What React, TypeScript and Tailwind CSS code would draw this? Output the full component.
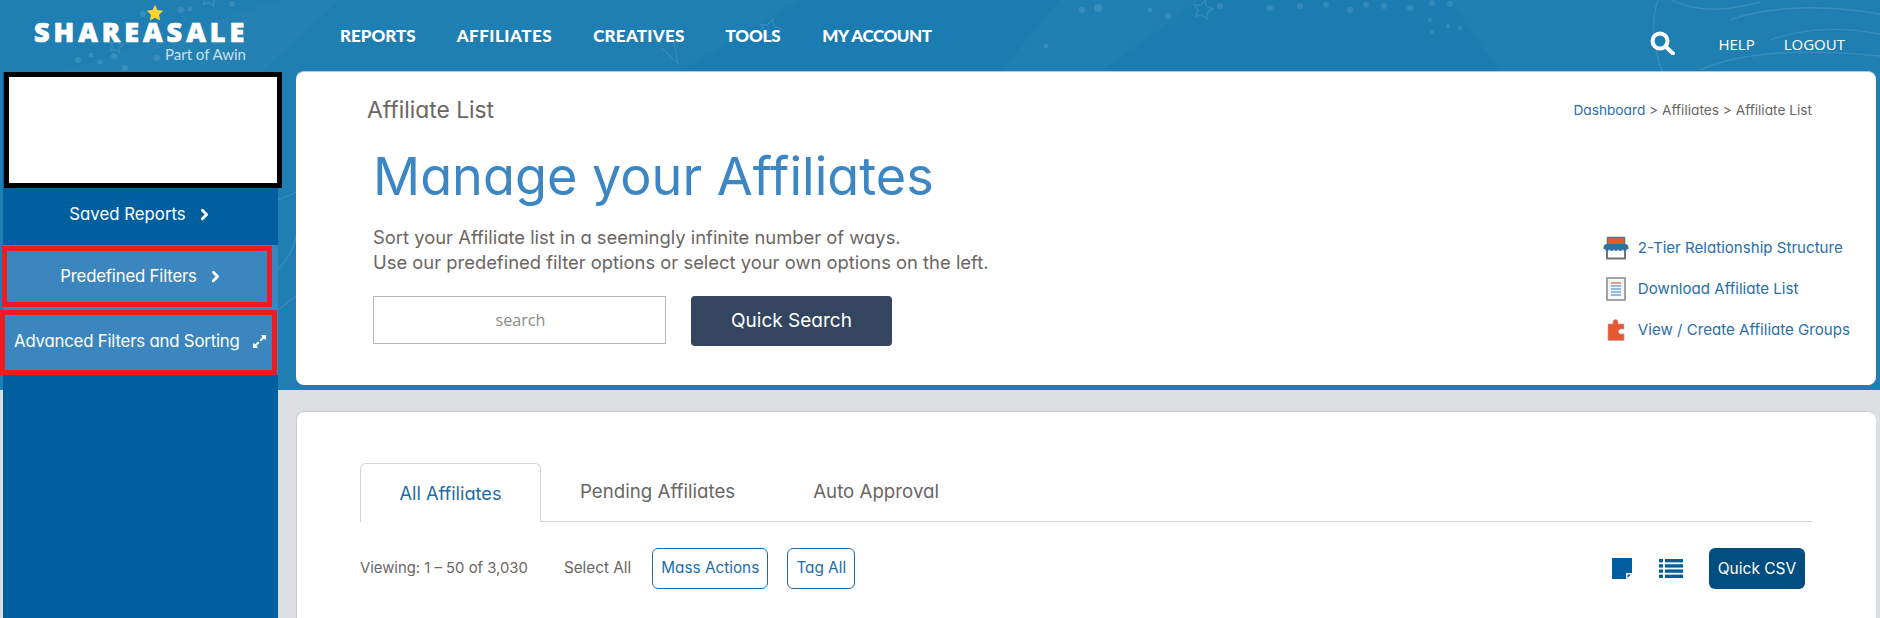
import { ChevronRight } from "lucide-react";
import { FaExpandAlt } from "react-icons/fa";

function Star({ x, y, r, fill = "none" }: { x: number; y: number; r: number; fill?: string }) {
  const pts: string[] = [];
  for (let i = 0; i < 10; i++) {
    const a = (Math.PI / 5) * i - Math.PI / 2 + 0.2;
    const d = i % 2 === 0 ? r : r * 0.5;
    pts.push(`${x + Math.cos(a) * d},${y + Math.sin(a) * d}`);
  }
  return <polygon points={pts.join(" ")} fill={fill} stroke="#ffffff" strokeWidth="1.4" />;
}

const dots: [number, number, number][] = [
  [78, 60, 3], [91, 55, 2.5], [100, 62, 2.5], [114, 56, 3], [125, 68, 3], [143, 14, 3], [181, 10, 3], [190, 9, 2.5],
  [157, 58, 3], [232, 4, 3], [1046, 46, 2.5], [1058, 82, 2], [1082, 10, 3], [1098, 8, 4], [1150, 10, 2.5], [1168, 16, 3],
  [1220, 6, 3], [1270, 8, 3], [1300, 6, 3], [1326, 5, 3], [1350, 10, 3], [1366, 5, 3], [1384, 6, 3], [1410, 8, 3], [1430, 20, 2],
  [1432, 3, 3], [1450, 4, 3], [1432, 32, 2], [1448, 26, 2], [1460, 28, 2],
];

function Backdrop() {
  return (
    <div className="absolute inset-x-0 top-0 h-[390px] bg-[#1f7fb3] overflow-hidden">
      <svg width="1880" height="390" viewBox="0 0 1880 390" className="block">
        <polygon points="60,72 280,0 340,0 120,200" fill="#ffffff" opacity="0.02" />
        <polygon points="1100,72 1200,0 1450,0 1500,72" fill="#0f75ad" opacity="0.25" />
        <polygon points="680,72 800,0 1060,0 1000,72" fill="#0f75ad" opacity="0.2" />
        <g opacity="0.11">
          {dots.map(([x, y, r], i) => (
            <circle key={i} cx={x} cy={y} r={r} fill="#ffffff" />
          ))}
          <Star x={770} y={30} r={11} />
          <Star x={1203} y={10} r={10} />
          <Star x={116} y={46} r={7} />
          <Star x={210} y={-2} r={9} />
          <path d="M672 32 L678 64 L662 48" fill="none" stroke="#ffffff" strokeWidth="1" />
          <g fill="none" stroke="#ffffff" strokeWidth="1.3">
            <path d="M1658 0 C1650 22 1654 48 1662 72" />
            <path d="M1672 0 C1700 14 1730 10 1760 2" />
            <path d="M1730 20 C1770 6 1820 4 1880 14" />
            <path d="M1700 70 C1740 52 1800 48 1880 56" />
            <path d="M1770 40 C1810 26 1850 28 1880 34" />
            <path d="M278 200 C290 196 296 192 300 190" />
            <path d="M278 270 C286 260 294 250 296 236" />
            <path d="M278 310 L296 296" />
          </g>
        </g>
      </svg>
    </div>
  );
}

function StoreIcon() {
  return (
    <svg width="26" height="24" viewBox="0 0 26 24">
      <path d="M4 12v10.500h18V12" fill="#fff" stroke="#6b7280" strokeWidth="2" />
      <path d="M5 2h16v6H5z" fill="#e8572f" />
      <path d="M4 1.500h18" stroke="#6b7280" strokeWidth="1.600" />
      <path d="M4.500 2v7M21.500 2v7" stroke="#6b7280" strokeWidth="1.600" />
      <path d="M0.500 12c0-2.500 1.500-4 3.500-4h18c2 0 3.500 1.500 3.500 4v1h-25z" fill="#2f6fa8" />
      <path d="M2 13c0 2.500 4 2.500 4 0 0 2.500 5 2.500 5 0 0 2.500 4 2.500 4 0 0 2.500 5 2.500 5 0 0 2.500 4 2.500 4 0z" fill="#2f6fa8" />
    </svg>
  );
}

function DocIcon() {
  return (
    <svg width="20" height="24" viewBox="0 0 20 24">
      <rect x="1" y="1" width="18" height="22" fill="#f7f8fa" stroke="#8e8e8e" strokeWidth="1.6" />
      <path d="M5 6h10" stroke="#f0826a" strokeWidth="1.6" />
      <path d="M5 9h10M5 12h10M5 15h10M5 18h10" stroke="#6fa4d6" strokeWidth="1.6" />
    </svg>
  );
}

function PuzzleIcon() {
  return (
    <svg width="18" height="22" viewBox="0 0 18 22">
      <path d="M1 5h5V3a2.500 2.500 0 0 1 5 0v2h6v5h-3a2.300 2.300 0 0 0 0 5h3v6.500H1z" fill="#e8572f" stroke="#a8a8a8" strokeWidth="0.6" />
    </svg>
  );
}

function NoteIcon() {
  return (
    <svg width="20" height="21" viewBox="0 0 20 21" fill="#00609f">
      <path d="M0 0h20v15h-6v6H0z" />
      <path d="M15.500 16.500h3.500l-3.500 3.500z" />
    </svg>
  );
}

function ListIcon() {
  return (
    <svg width="24" height="19" viewBox="0 0 24 19" fill="#00609f">
      <rect x="0" y="0" width="4" height="3.400" />
      <rect x="6" y="0" width="18" height="3.400" />
      <rect x="0" y="5.200" width="4" height="3.400" />
      <rect x="6" y="5.200" width="18" height="3.400" />
      <rect x="0" y="10.400" width="4" height="3.400" />
      <rect x="6" y="10.400" width="18" height="3.400" />
      <rect x="0" y="15.600" width="4" height="3.400" />
      <rect x="6" y="15.600" width="18" height="3.400" />
    </svg>
  );
}

function Header() {
  const nav: [string, string][] = [
    ["REPORTS", "tracking-[0px]"],
    ["AFFILIATES", "tracking-[0.5px]"],
    ["CREATIVES", "tracking-[0.25px]"],
    ["TOOLS", "tracking-[-0.2px]"],
    ["MY ACCOUNT", "tracking-[-0.4px] ml-px"],
  ];
  return (
    <header className="relative h-[72px] flex items-start text-white">
      <div className="w-[340px] shrink-0 pl-[34px] pt-[4px] relative">
        <svg width="18" height="18" viewBox="0 0 24 24" className="ml-[112px] block">
          <path d="M12 1l3.300 7 7.700 1-5.600 5.300 1.400 7.700L12 18.300 5.200 22l1.400-7.700L1 9l7.700-1z" fill="#fcd32f" />
        </svg>
        <div className="w-[212px] -mt-px font-['Open_Sans',sans-serif] font-extrabold text-[27px] leading-[22px] tracking-[4px] [-webkit-text-stroke:0.7px_white] whitespace-nowrap">SHAREASALE</div>
        <div className="w-[212px] text-right font-[Lato,sans-serif] text-[15px] leading-[16px] mt-[3px] text-[#c9e0ee]">Part of Awin</div>
      </div>
      <nav className="flex gap-[41px] pt-[25px] font-[Lato,sans-serif] font-black text-[17px] leading-[21px]">
        {nav.map(([n, t]) => (
          <span key={n} className={`whitespace-nowrap ${t}`}>{n}</span>
        ))}
      </nav>
      <div className="ml-auto flex items-center pt-[32px] pr-[35px] font-['Open_Sans',sans-serif] text-[15px] leading-[24px]">
        <svg width="25" height="24" viewBox="0 0 25 24" fill="none" stroke="#ffffff" className="mr-[43px] -mt-[2px]">
          <circle cx="10" cy="10" r="7.500" strokeWidth="4" />
          <path d="M15.500 15.500L23 22.500" strokeWidth="4" strokeLinecap="round" />
        </svg>
        <span>HELP</span>
        <span className="ml-[29px]">LOGOUT</span>
      </div>
    </header>
  );
}

function Sidebar() {
  return (
    <aside className="relative z-10 ml-[3px] w-[275px] shrink-0 bg-[#00609f] text-white text-[16.800px]">
      <div className="ml-px w-[278px] h-[116px] bg-white border-[5px] border-black" />
      <div className="h-[57px] flex items-center justify-center gap-[10px] pb-[4px] pl-px">
        <span>Saved Reports</span>
        <ChevronRight size={17} strokeWidth={4} />
      </div>
      <div className="h-[130px] bg-[#3c86bf] flex flex-col">
        <div className="-ml-px mt-px w-[270px] h-[61px] border-[5px] border-[#ed1c24] flex items-center justify-center gap-[10px] pl-[10px]">
          <span className="tracking-[-0.2px]">Predefined Filters</span>
          <ChevronRight size={17} strokeWidth={4} />
        </div>
        <div className="-ml-[3px] mt-[3px] w-[277px] h-[65px] border-[5px] border-[#ed1c24] flex items-center pl-[9px] pb-[2px] whitespace-nowrap">
          <span className="tracking-[-0.2px]">Advanced Filters and Sorting</span>
          <FaExpandAlt className="ml-[12px] text-[15px]" />
        </div>
      </div>
    </aside>
  );
}

function Hero() {
  const links: [React.ReactNode, string][] = [
    [<StoreIcon />, "2-Tier Relationship Structure"],
    [<DocIcon />, "Download Affiliate List"],
    [<PuzzleIcon />, "View / Create Affiliate Groups"],
  ];
  return (
    <section className="relative h-[314px] bg-white rounded-lg border-t border-[#a9cce0] text-[#6b6663]">
      <div className="flex justify-between items-start pt-[24px] pl-[71px] pr-[64px]">
        <h2 className="text-[22.800px] leading-[28px] font-normal">Affiliate List</h2>
        <div className="text-[13.700px] leading-[28px] text-[#6b6663]">
          <span className="text-[#2a6eaa]">Dashboard</span> &gt; Affiliates &gt; Affiliate List
        </div>
      </div>
      <div className="flex justify-between">
        <div className="pl-[77px]">
          <h1 className="text-[52.200px] leading-[64px] mt-[20px] font-normal text-[#3c86c4] whitespace-nowrap">Manage your Affiliates</h1>
          <p className="mt-[17px] text-[18.400px] leading-[25px]">
            Sort your Affiliate list in a seemingly infinite number of ways.
            <br />
            Use our predefined filter options or select your own options on the left.
          </p>
          <div className="mt-[21px] flex gap-[25px]">
            <div className="w-[293px] h-[48px] border border-[#b5b5b5] flex items-center justify-center font-['Open_Sans',sans-serif] text-[16.200px] text-[#8b8b8b] pl-[2px]">search</div>
            <button className="w-[201px] h-[50px] rounded bg-[#34465f] text-white text-[19px]">Quick Search</button>
          </div>
        </div>
        <ul className="mr-[26px] mt-[112px] flex flex-col gap-[17px] text-[15.100px] text-[#2a6eaa]">
          {links.map(([icon, t]) => (
            <li key={t} className="flex items-center h-[24px] whitespace-nowrap">
              <span className="w-[34px] flex justify-center -ml-[3px] mr-[5px]">{icon}</span>
              {t}
            </li>
          ))}
        </ul>
      </div>
    </section>
  );
}

function ListPanel() {
  return (
    <section className="flex-1 mt-[26px] bg-white rounded-t-lg border-l border-t border-[#c9cacd] pl-[63px] pr-[64px] pt-[51px] text-[#6b6663]">
      <div className="flex items-end h-[59px] border-b border-[#d5d5d5] text-[18.700px]">
        <div className="w-[181px] h-[59px] -mb-px pt-px bg-white border border-b-0 border-[#d5d5d5] rounded-t-md flex items-center justify-center text-[18.200px] text-[#1d6ca8]">All Affiliates</div>
        <div className="h-[58px] flex items-center pt-px pl-[39px] whitespace-nowrap">Pending Affiliates</div>
        <div className="h-[58px] flex items-center pt-px pl-[78px] whitespace-nowrap">Auto Approval</div>
      </div>
      <div className="flex items-center mt-[25px] text-[15.300px]">
        <span className="whitespace-nowrap text-[14.850px]">Viewing: 1 – 50 of 3,030</span>
        <span className="ml-[36px] whitespace-nowrap">Select All</span>
        <button className="ml-[21px] w-[116px] h-[41px] rounded-md border border-[#1d6ca8] text-[#1d6ca8]">Mass Actions</button>
        <button className="ml-[19px] w-[68px] h-[41px] rounded-md border border-[#1d6ca8] text-[#1d6ca8]">Tag All</button>
        <div className="ml-auto flex items-center">
          <NoteIcon />
          <span className="ml-[27px]"><ListIcon /></span>
          <button className="ml-[26px] mr-[7px] mt-px w-[96px] h-[41px] rounded-md bg-[#004e80] text-white text-[15.500px]">Quick CSV</button>
        </div>
      </div>
    </section>
  );
}

export default function App() {
  return (
    <div className="relative w-[1880px] h-[618px] overflow-hidden bg-[#dddee2] font-[Inter,sans-serif] [font-feature-settings:'cv11'] flex flex-col">
      <Backdrop />
      <div className="relative">
        <Header />
      </div>
      <div className="relative flex flex-1 min-h-0">
        <Sidebar />
        <main className="ml-[18px] w-[1580px] -mt-px flex flex-col">
          <Hero />
          <ListPanel />
        </main>
      </div>
    </div>
  );
}
